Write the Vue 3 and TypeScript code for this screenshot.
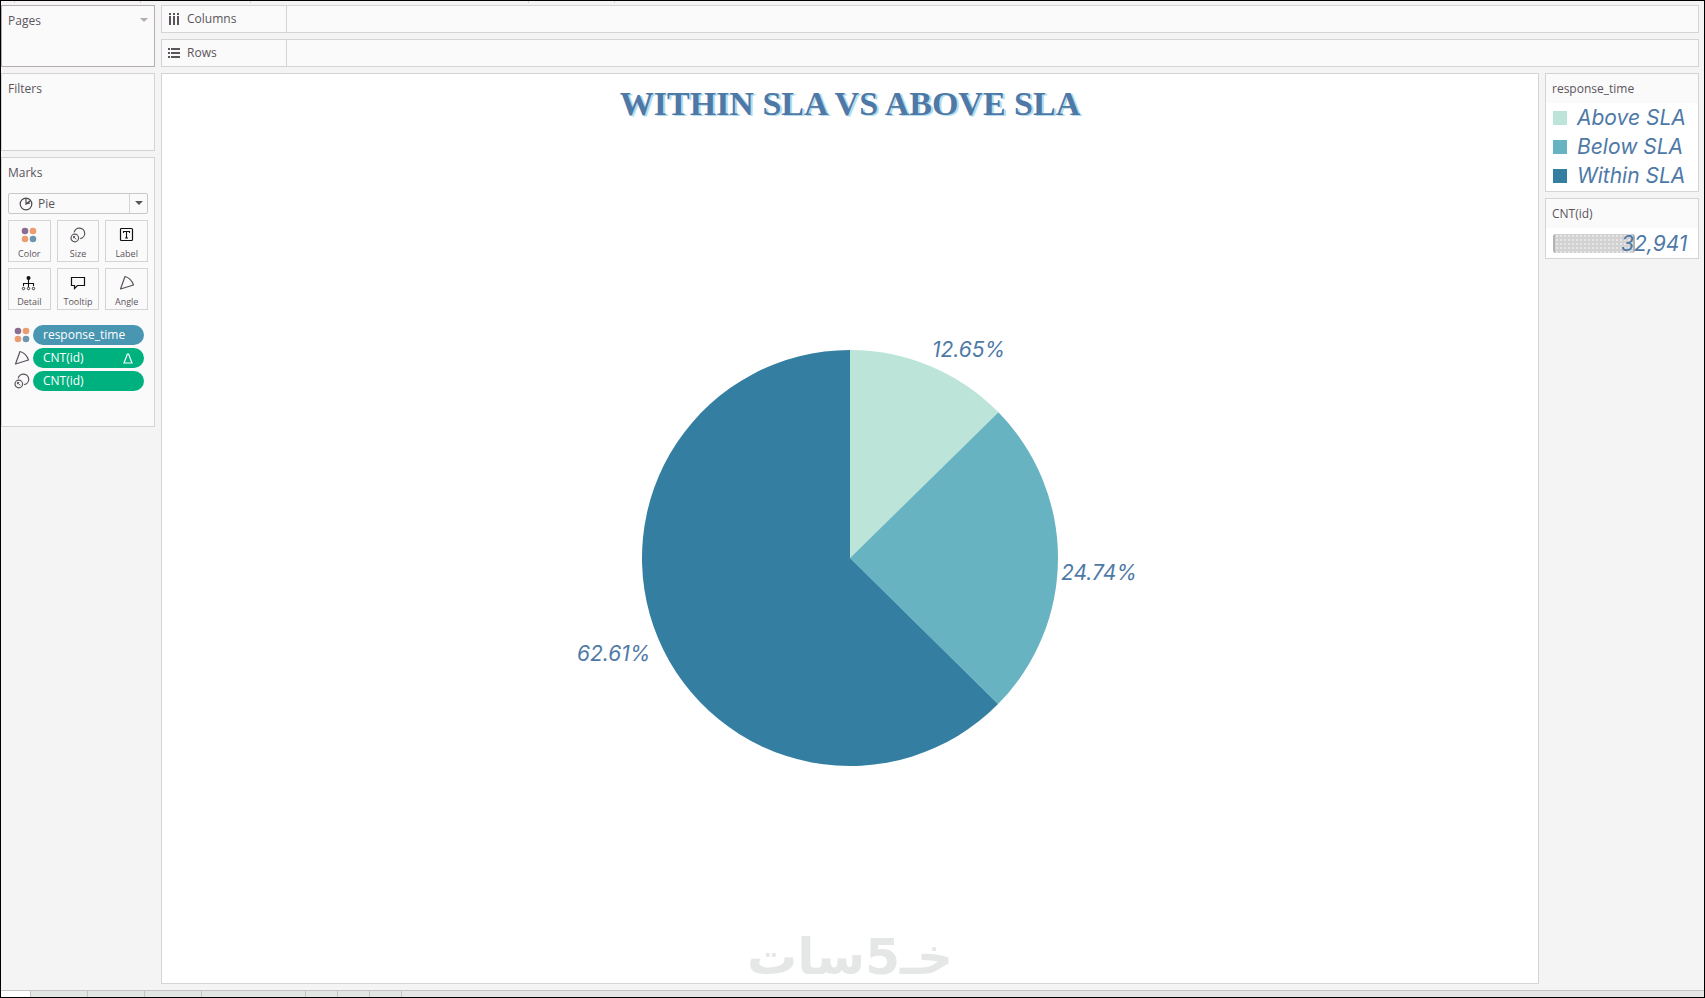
<script setup lang="ts">
interface Slice {
  name: string
  percent: number
  color: string
  labelX: number
  labelY: number
}

const slices: Slice[] = [
  { name: 'Above SLA', percent: 12.65, color: '#bce4d8', labelX: 932, labelY: 357 },
  { name: 'Below SLA', percent: 24.74, color: '#67b3c2', labelX: 1061, labelY: 580 },
  { name: 'Within SLA', percent: 62.61, color: '#347ea2', labelX: 577, labelY: 661 },
]

const cx = 850
const cy = 558
const radius = 208

function point(percent: number): string {
  const angle = (percent / 100) * Math.PI * 2
  return `${cx + radius * Math.sin(angle)} ${cy - radius * Math.cos(angle)}`
}

let total = 0
const wedges = slices.map((slice) => {
  const start = total
  total += slice.percent
  const large = slice.percent > 50 ? 1 : 0
  return {
    ...slice,
    path: `M${cx} ${cy}L${point(start)}A${radius} ${radius} 0 ${large} 1 ${point(total)}Z`,
  }
})

const shelves = ['Columns', 'Rows']
const cards = ['Color', 'Size', 'Label', 'Detail', 'Tooltip', 'Angle']
const pills = [
  { icon: 'Color', text: 'response_time', kind: 'dimension', delta: false },
  { icon: 'Angle', text: 'CNT(id)', kind: 'measure', delta: true },
  { icon: 'Size', text: 'CNT(id)', kind: 'measure', delta: false },
]
const tabs = ['active', 'normal', 'normal', 'normal', 'wide', 'new', 'new', 'new']
</script>

<template>
  <div class="app">
    <svg class="defs" aria-hidden="true">
      <symbol id="Color" viewBox="0 0 16 16">
        <circle cx="4" cy="4" r="3.3" fill="#8a6d90" />
        <circle cx="12" cy="4" r="3.3" fill="#eb9c70" />
        <circle cx="4" cy="12" r="3.3" fill="#eb9c70" />
        <circle cx="12" cy="12" r="3.3" fill="#6b97ae" />
      </symbol>
      <symbol id="Size" viewBox="0 0 16 16">
        <g fill="none" stroke="#5a515c" stroke-width="1.2">
          <path d="M4.2 5.4A5.3 5.3 0 1 1 10.2 11.6" />
          <circle cx="4.8" cy="11" r="3.8" />
          <path d="M3.4 9.6l2.8 2.8M3.5 11.2v-1.7h1.7" stroke-width="1" />
        </g>
      </symbol>
      <symbol id="Label" viewBox="0 0 16 16">
        <g fill="none" stroke="#111">
          <rect x="1.5" y="1.5" width="12" height="12" rx="1" stroke-width="1.2" />
          <path d="M4.5 6V4.5h6V6M7.5 4.5V11M6 11h3" stroke-width="1.1" />
        </g>
      </symbol>
      <symbol id="Detail" viewBox="0 0 16 16">
        <circle cx="7.5" cy="3" r="2" fill="#111" />
        <path d="M7.5 4v8M2.5 11V8.5h10V11" fill="none" stroke="#111" stroke-width="1.1" />
        <g fill="none" stroke="#333">
          <circle cx="2.5" cy="13.5" r="1.2" />
          <circle cx="7.5" cy="13.5" r="1.2" />
          <circle cx="12.5" cy="13.5" r="1.2" />
        </g>
      </symbol>
      <symbol id="Tooltip" viewBox="0 0 16 16">
        <path d="M1.5 2.5h13v8H7.5L4.5 13.5v-3h-3z" fill="none" stroke="#111" stroke-width="1.2" />
      </symbol>
      <symbol id="Angle" viewBox="0 0 16 16">
        <path d="M6 1.5Q12 3 14.5 10L1.5 14Z" fill="none" stroke="#5a515c" stroke-width="1.2" stroke-linejoin="round" />
      </symbol>
    </svg>

    <div class="toolbar-edge"><i></i><i></i><i></i><i></i><i></i></div>

    <main class="workspace">
      <aside class="side">
        <section class="panel pages">
          <h2>Pages</h2>
          <button class="menu" aria-label="Pages menu">
            <svg width="8" height="5" viewBox="0 0 8 5"><path d="M0 0h8L4 4z" fill="#b3acb0" /></svg>
          </button>
        </section>
        <section class="panel filters"><h2>Filters</h2></section>
        <section class="panel marks">
          <h2>Marks</h2>
          <div class="mark-type">
            <svg width="14" height="14" viewBox="0 0 14 14" fill="none" stroke="#4d464e" stroke-width="1.2">
              <circle cx="7" cy="7" r="5.8" /><path d="M7 1.5V7l4.5-3.5M7 7l4-1" />
            </svg>
            <select aria-label="Mark type"><option>Pie</option></select>
            <span class="arrow"><svg width="8" height="5" viewBox="0 0 8 5"><path d="M0 0h8L4 4z" fill="#5a545b" /></svg></span>
          </div>
          <div class="cards">
            <button v-for="card in cards" :key="card" class="card">
              <svg width="16" height="16"><use :href="'#' + card" /></svg>
              <span>{{ card }}</span>
            </button>
          </div>
          <ul class="pills">
            <li v-for="(pill, i) in pills" :key="i">
              <svg width="16" height="16"><use :href="'#' + pill.icon" /></svg>
              <button class="pill" :class="pill.kind">
                <span>{{ pill.text }}</span>
                <svg v-if="pill.delta" width="10" height="11" viewBox="0 0 10 11"><path d="M4.4 1h1.2L9 10H1z" fill="none" stroke="#fff" stroke-width="1.2" /></svg>
              </button>
            </li>
          </ul>
        </section>
      </aside>

      <div class="main">
        <div class="shelves">
          <div v-for="shelf in shelves" :key="shelf" class="shelf">
            <div class="shelf-name">
              <svg v-if="shelf === 'Columns'" width="12" height="12" viewBox="0 0 12 12" fill="#5a545b">
                <path d="M1 0h2v2H1zM5 0h2v2H5zM9 0h2v2H9zM1 3h2v9H1zM5 3h2v9H5zM9 3h2v9H9z" />
              </svg>
              <svg v-else width="12" height="12" viewBox="0 0 12 12" fill="#5a545b">
                <path d="M0 1h2v2H0zM0 5h2v2H0zM0 9h2v2H0zM3 1h9v2H3zM3 5h9v2H3zM3 9h9v2H3z" />
              </svg>
              <span>{{ shelf }}</span>
            </div>
          </div>
        </div>

        <div class="content">
          <section class="sheet">
            <h1>WITHIN SLA VS ABOVE SLA</h1>
            <svg class="chart" viewBox="162 134 1376 790" role="img" aria-label="Share of responses by SLA">
              <path v-for="wedge in wedges" :key="wedge.name" :d="wedge.path" :fill="wedge.color" />
              <text v-for="wedge in wedges" :key="wedge.name" :x="wedge.labelX" :y="wedge.labelY">{{ wedge.percent }}%</text>
            </svg>
            <div class="watermark" dir="rtl" lang="ar">خـ5سات</div>
          </section>

          <aside class="legends">
            <section class="legend color-legend">
              <h2>response_time</h2>
              <ul>
                <li v-for="slice in slices" :key="slice.name">
                  <i class="swatch" :style="{ background: slice.color }"></i>
                  <span>{{ slice.name }}</span>
                </li>
              </ul>
            </section>
            <section class="legend">
              <h2>CNT(id)</h2>
              <div class="size-row"><i class="size-bar"></i><span>32,941</span></div>
            </section>
          </aside>
        </div>
      </div>
    </main>

    <div class="tabs"><i v-for="(tab, i) in tabs" :key="i" :class="tab"></i></div>
  </div>
</template>

<style>
body {
  margin: 0;
}
</style>

<style scoped>
* {
  box-sizing: border-box;
}
.app {
  display: flex;
  flex-direction: column;
  min-height: 100vh;
  border: 1px solid #000;
  background: #f4f4f4;
  color: #5a545b;
  font: 12px/16px "Open Sans", "Noto Sans", sans-serif;
}
.defs {
  position: absolute;
  width: 0;
  height: 0;
}
h1,
h2,
ul {
  margin: 0;
  padding: 0;
  font-weight: 400;
  list-style: none;
}
h2 {
  font-size: 12px;
  line-height: 16px;
}
button,
select {
  margin: 0;
  padding: 0;
  border: 0;
  background: none;
  color: inherit;
  font: inherit;
}
.toolbar-edge {
  display: flex;
  height: 2px;
}
.toolbar-edge i {
  width: 110px;
  border-right: 1px solid #d4d4d4;
}
.toolbar-edge i:first-child {
  width: 14px;
}
.toolbar-edge i:nth-child(2) {
  width: 126px;
}
.toolbar-edge i:nth-child(4) {
  width: 278px;
}
.toolbar-edge i:nth-child(5) {
  width: 86px;
}
.workspace {
  display: flex;
  flex: 1;
  gap: 6px;
  padding: 2px 5px 6px 0;
}
.side {
  display: flex;
  flex: none;
  flex-direction: column;
  gap: 6px;
  width: 154px;
}
.panel {
  border: 1px solid #d4d4d4;
  background: #fafafa;
  padding: 7px 6px;
}
.pages {
  display: flex;
  align-items: flex-start;
  justify-content: space-between;
  height: 62px;
  border-color: #b5adb0;
}
.menu {
  display: flex;
  padding: 5px 0;
}
.filters {
  height: 78px;
}
.marks {
  height: 270px;
}
.mark-type {
  display: flex;
  align-items: center;
  height: 21px;
  margin-top: 12px;
  padding-left: 10px;
  border: 1px solid #c8c8c8;
  border-radius: 2px;
}
.mark-type select {
  flex: 1;
  align-self: stretch;
  padding-left: 5px;
  appearance: none;
  font-size: 12px;
}
.arrow {
  display: flex;
  align-items: center;
  justify-content: center;
  align-self: stretch;
  width: 18px;
  border-left: 1px solid #d4d4d4;
}
.cards {
  display: grid;
  grid-template-columns: repeat(3, 1fr);
  gap: 6px;
  margin-top: 6px;
}
.card {
  display: flex;
  flex-direction: column;
  align-items: center;
  height: 42px;
  padding-top: 6px;
  border: 1px solid #d4d4d4;
  font-size: 9px;
  line-height: 12px;
}
.card span {
  margin-top: 5px;
}
.pills {
  display: flex;
  flex-direction: column;
  gap: 3px;
  margin-top: 15px;
  padding: 0 4px 0 6px;
}
.pills li {
  display: flex;
  align-items: center;
  gap: 3px;
}
.pill {
  display: flex;
  flex: 1;
  align-items: center;
  justify-content: space-between;
  height: 20px;
  padding: 0 11px 0 10px;
  border-radius: 10px;
  color: #fff;
}
.dimension {
  background: #4996b2;
}
.measure {
  background: #00b180;
}
.main {
  display: flex;
  flex: 1;
  flex-direction: column;
  gap: 6px;
  min-width: 0;
}
.shelves {
  display: flex;
  flex-direction: column;
  gap: 6px;
}
.shelf {
  height: 28px;
  border: 1px solid #d4d4d4;
  background: #fafafa;
}
.shelf-name {
  display: flex;
  align-items: center;
  gap: 7px;
  width: 125px;
  height: 100%;
  padding-left: 6px;
  border-right: 1px solid #d4d4d4;
}
.content {
  display: flex;
  flex: 1;
  align-items: flex-start;
  gap: 6px;
}
.sheet {
  display: flex;
  flex: 1;
  flex-direction: column;
  align-self: stretch;
  align-items: center;
  min-width: 0;
  border: 1px solid #d4d4d4;
  background: #fff;
}
h1 {
  height: 60px;
  padding-top: 8px;
  color: #4e79a7;
  font: 700 34px/44px "Liberation Serif", serif;
  text-shadow: 2px 1px 0 #b4dcea;
}
.chart {
  width: 100%;
}
.chart text {
  fill: #4e79a7;
  font: italic 21px Inter, sans-serif;
}
.watermark {
  padding-top: 8px;
  color: #e5e7e7;
  font: 700 50px/50px "DejaVu Sans", sans-serif;
}
.legends {
  display: flex;
  flex: none;
  flex-direction: column;
  gap: 6px;
  width: 154px;
}
.legend {
  border: 1px solid #d4d4d4;
  background: #fff;
}
.color-legend {
  padding-bottom: 1px;
}
.legend h2 {
  height: 29px;
  padding: 7px 6px;
  background: #fafafa;
}
.legend li {
  display: flex;
  align-items: center;
  gap: 10px;
  height: 29px;
  padding-left: 7px;
}
.legend span {
  color: #4e79a7;
  font: italic 21px/29px Inter, sans-serif;
  white-space: nowrap;
}
.swatch {
  width: 14px;
  height: 14px;
}
.size-row {
  display: flex;
  align-items: center;
  height: 30px;
  padding: 0 7px;
}
.size-bar {
  flex: none;
  width: 82px;
  height: 19px;
  margin-right: -14px;
  border: solid #b5b0b2;
  border-width: 0 2px;
  border-radius: 3px;
  background: radial-gradient(circle, #e6e6e6 1px, transparent 1px) 0 0 / 4px 4px #d2d2d2;
}
.tabs {
  display: flex;
  height: 7px;
  border-top: 1px solid #c4c4c4;
  background: #e6e6e6;
}
.tabs i {
  width: 57px;
  border-right: 1px solid #c4c4c4;
  background: #e2e6e3;
}
.tabs .active {
  width: 30px;
  background: #fff;
}
.tabs .wide {
  width: 104px;
}
.tabs .new {
  width: 32px;
}
</style>
